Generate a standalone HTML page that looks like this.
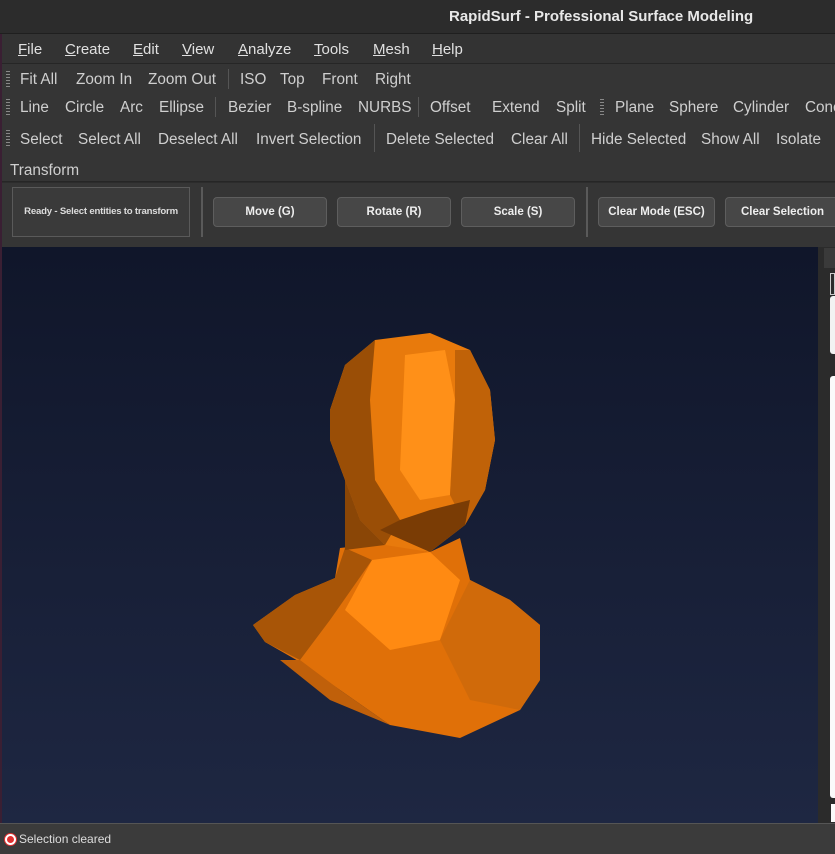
<!DOCTYPE html>
<html><head><meta charset="utf-8"><style>
*{margin:0;padding:0;box-sizing:border-box}
body{width:835px;height:854px;overflow:hidden;background:#2c2c2c;font-family:"Liberation Sans",sans-serif;position:relative;color:#d4d4d4}
.abs{position:absolute}
.title{left:0;top:0;width:835px;height:34px;background:#2c2c2c;border-bottom:1px solid #1f1f1f}
.title span{position:absolute;left:449px;top:8px;color:#e8e8e8;font-weight:bold;font-size:15px}
.menu{left:2px;top:34px;width:833px;height:30px;background:#333;border-bottom:1px solid #262626;font-size:15px;color:#e0e0e0}
.menu span{position:absolute;top:7px}
.tb{left:2px;width:833px;background:#353535;font-size:15.3px;color:#cfcfcf}
.tb span{position:absolute;white-space:nowrap;margin-top:1px}
.grip{position:absolute;width:4px;height:16px;background:repeating-linear-gradient(#888 0 1px,transparent 1px 3px)}
.sep{position:absolute;width:1px;background:#555}
.btn{position:absolute;top:197px;height:30px;background:#474747;border:1px solid #5e5e5e;border-radius:4px;color:#eee;font-size:11.5px;font-weight:bold;text-align:center;line-height:28px}
</style></head><body>
<div class="abs" style="left:0;top:0;width:2px;height:854px;background:#3a1f33"></div>
<div class="abs title"><span>RapidSurf - Professional Surface Modeling</span></div>
<div class="abs menu">
<span style="left:16px"><u>F</u>ile</span><span style="left:63px"><u>C</u>reate</span><span style="left:131px"><u>E</u>dit</span><span style="left:180px"><u>V</u>iew</span><span style="left:236px"><u>A</u>nalyze</span><span style="left:312px"><u>T</u>ools</span><span style="left:371px"><u>M</u>esh</span><span style="left:430px"><u>H</u>elp</span>
</div>
<div class="abs tb" style="top:64px;height:118px;border-bottom:1px solid #262626">
<div class="grip" style="left:4px;top:7px"></div>
<span style="left:18px;top:6px">Fit All</span><span style="left:74px;top:6px">Zoom In</span><span style="left:146px;top:6px">Zoom Out</span><div class="sep" style="left:226px;top:5px;height:20px"></div><span style="left:238px;top:6px">ISO</span><span style="left:278px;top:6px">Top</span><span style="left:320px;top:6px">Front</span><span style="left:373px;top:6px">Right</span>
<div class="grip" style="left:4px;top:35px"></div>
<span style="left:18px;top:34px">Line</span><span style="left:63px;top:34px">Circle</span><span style="left:118px;top:34px">Arc</span><span style="left:157px;top:34px">Ellipse</span><div class="sep" style="left:213px;top:33px;height:20px"></div><span style="left:226px;top:34px">Bezier</span><span style="left:285px;top:34px">B-spline</span><span style="left:356px;top:34px">NURBS</span><div class="sep" style="left:416px;top:33px;height:20px"></div><span style="left:428px;top:34px">Offset</span><span style="left:490px;top:34px">Extend</span><span style="left:554px;top:34px">Split</span><div class="grip" style="left:598px;top:35px"></div><span style="left:613px;top:34px">Plane</span><span style="left:667px;top:34px">Sphere</span><span style="left:731px;top:34px">Cylinder</span><span style="left:803px;top:34px">Cone</span>
<div class="grip" style="left:4px;top:66px"></div>
<span style="left:18px;top:66px">Select</span><span style="left:76px;top:66px">Select All</span><span style="left:156px;top:66px">Deselect All</span><span style="left:254px;top:66px">Invert Selection</span><div class="sep" style="left:372px;top:60px;height:28px"></div><span style="left:384px;top:66px">Delete Selected</span><span style="left:509px;top:66px">Clear All</span><div class="sep" style="left:577px;top:60px;height:28px"></div><span style="left:589px;top:66px">Hide Selected</span><span style="left:699px;top:66px">Show All</span><span style="left:774px;top:66px">Isolate</span>
<span style="left:8px;top:97px">Transform</span>
</div>
<div class="abs" style="left:2px;top:183px;width:833px;height:64px;background:#353535"></div>
<div class="abs" style="left:12px;top:187px;width:178px;height:50px;background:#3a3a3a;border:1px solid #5a5a5a;color:#ddd;font-size:9.6px;letter-spacing:-0.2px;font-weight:bold;text-align:center;line-height:48px;white-space:nowrap">Ready - Select entities to transform</div>
<div class="sep" style="left:201px;top:187px;height:50px;background:#5a5a5a;width:2px"></div>
<div class="btn" style="left:213px;width:114px">Move (G)</div>
<div class="btn" style="left:337px;width:114px">Rotate (R)</div>
<div class="btn" style="left:461px;width:114px">Scale (S)</div>
<div class="sep" style="left:586px;top:187px;height:50px;background:#5a5a5a;width:2px"></div>
<div class="btn" style="left:598px;width:117px">Clear Mode (ESC)</div>
<div class="btn" style="left:725px;width:115px">Clear Selection</div>
<div class="abs" style="left:2px;top:247px;width:816px;height:576px;background:linear-gradient(#10162a,#1e2742)"></div>
<div class="abs" style="left:818px;top:247px;width:17px;height:576px;background:#2b2b2b"></div>
<div class="abs" style="left:824px;top:248px;width:11px;height:20px;background:#3a3a3a"></div>
<div class="abs" style="left:830px;top:273px;width:5px;height:22px;border:1px solid #ccc"></div>
<div class="abs" style="left:830px;top:296px;width:5px;height:58px;background:#f2f2f2;border-radius:3px 0 0 3px"></div>
<div class="abs" style="left:830px;top:376px;width:5px;height:422px;background:#fafafa;border-radius:3px 0 0 3px"></div>
<div class="abs" style="left:831px;top:804px;width:4px;height:18px;background:#fafafa"></div>
<svg class="abs" style="left:0;top:0" width="835" height="854">
<polygon points="340,548 385,543 430,552 460,538 470,580 510,600 540,625 540,680 520,710 460,738 390,725 340,690 300,662 265,642 253,625 295,595 335,578" fill="#e07008"/>
<polygon points="253,625 295,595 335,578 345,548 372,560 330,620 300,660 265,642" fill="#a85507"/>
<polygon points="372,560 430,552 460,580 440,640 390,650 345,610" fill="#ff8a12"/>
<polygon points="440,640 470,580 510,600 540,625 540,680 520,710 470,700" fill="#d06a0a"/>
<polygon points="300,660 340,690 390,725 330,700 280,660" fill="#c0600a"/>
<polygon points="345,480 360,520 385,545 345,550" fill="#8a4606"/>
<polygon points="330,410 345,365 375,340 430,333 470,350 490,390 495,440 485,490 465,525 430,552 385,545 360,520 345,480 330,440" fill="#e87a0c"/>
<polygon points="330,410 345,365 375,340 370,400 375,480 400,520 385,545 360,520 345,480 330,440" fill="#9a4e06"/>
<polygon points="405,355 445,350 455,400 450,495 420,500 400,470" fill="#ff9018"/>
<polygon points="455,350 470,350 490,390 495,440 485,490 465,525 450,495 455,400" fill="#c06208"/>
<polygon points="380,530 430,552 465,525 470,500 430,510 400,520" fill="#7a3c05"/>
</svg>
<div class="abs" style="left:0;top:823px;width:835px;height:31px;background:#3b3b3b;border-top:1px solid #555"></div>
<div class="abs" style="left:5px;top:834px;width:11px;height:11px;border-radius:50%;background:#e03030;border:2px solid #fff;box-shadow:0 0 0 1px #e03030"></div>
<div class="abs" style="left:19px;top:832px;font-size:12px;color:#ddd">Selection cleared</div>
</body></html>
